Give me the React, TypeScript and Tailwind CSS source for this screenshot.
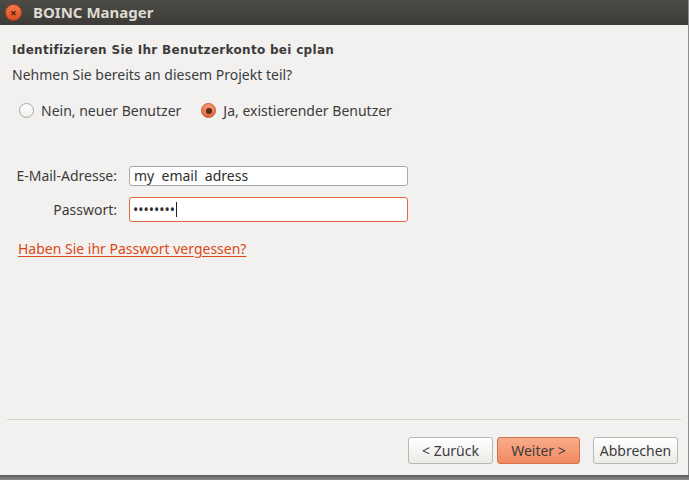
import React, { useState } from 'react';

const font = { fontFamily: '"Noto Sans", "DejaVu Sans", sans-serif' };

const Radio = ({ checked, label, onClick }: { checked: boolean; label: string; onClick: () => void }) => (
    <button onClick={onClick} className="flex items-center gap-[7px] text-[14px] text-[#3c3c3c]">
        {checked ? (
            <span className="w-[15px] h-[15px] rounded-full bg-gradient-to-b from-[#f59a6f] to-[#e0643a] border border-[#c8552d] flex items-center justify-center">
                <span className="w-[6px] h-[6px] rounded-full bg-[#5a2a1a]" />
            </span>
        ) : (
            <span className="w-[15px] h-[15px] rounded-full bg-gradient-to-b from-white to-[#f0efed] border border-[#a8a7a3]" />
        )}
        <span>{label}</span>
    </button>
);

export default function App() {
    const [existing, setExisting] = useState(true);

    return (
        <div className="w-[689px] h-[480px] bg-[#7a7a78] flex flex-col overflow-hidden" style={font}>
            <div className="flex h-[475px]">
                <div className="w-[688px] flex flex-col bg-[#f2f1f0]">
                    {/* title bar */}
                    <div className="h-[25px] flex items-center bg-gradient-to-b from-[#4d4b45] to-[#3c3b37] pl-[5px]">
                        <span className="w-[17px] h-[17px] rounded-full bg-gradient-to-b from-[#f47a4e] to-[#dc4e22] border border-[#a8401d] flex items-center justify-center text-[#5a1a08] text-[11px] leading-none font-bold">×</span>
                        <span className="ml-[11px] text-[15px] font-bold text-[#dfdbd2]">BOINC Manager</span>
                    </div>

                    <div className="flex-1 flex flex-col px-[12px]">
                        <div className="mt-[16px] text-[12px] tracking-[0.3px] font-bold text-[#3c3c3c]" style={{ fontFamily: '"DejaVu Sans", sans-serif' }}>
                            Identifizieren Sie Ihr Benutzerkonto bei cplan
                        </div>
                        <div className="mt-[5px] text-[14px] text-[#3c3c3c]">Nehmen Sie bereits an diesem Projekt teil?</div>

                        <div className="mt-[15px] ml-[7px] flex items-center gap-[20px]">
                            <Radio checked={!existing} label="Nein, neuer Benutzer" onClick={() => setExisting(false)} />
                            <Radio checked={existing} label="Ja, existierender Benutzer" onClick={() => setExisting(true)} />
                        </div>

                        <div className="mt-[44px] grid grid-cols-[105px_279px] gap-x-[12px] gap-y-[11px] items-center text-[14px] text-[#3c3c3c]">
                            <label className="text-right">E-Mail-Adresse:</label>
                            <input defaultValue="my  email  adress" className="h-[20px] rounded-[3px] border border-[#a9a8a4] bg-white px-[4px] text-[14px] text-[#2e2e2e] outline-none" style={{ whiteSpace: 'pre' }} />
                            <label className="text-right">Passwort:</label>
                            <div className="h-[25px] rounded-[3px] border border-[#e06a43] bg-white px-[3px] flex items-center">
                                <span className="text-[14px] leading-none text-[#2e2e2e]">••••••••</span>
                                <span className="ml-[1px] w-px h-[15px] bg-[#222]" />
                            </div>
                        </div>

                        <a href="#" className="mt-[16px] ml-[6px] self-start text-[14px] text-[#dd4814] underline underline-offset-2">
                            Haben Sie ihr Passwort vergessen?
                        </a>

                        <div className="flex-1" />
                        <div className="h-px bg-[#d6d4d0] -mx-[5px]" />

                        <div className="flex justify-end items-start h-[55px] pt-[17px] text-[14px]">
                            <button className="w-[85px] h-[27px] rounded-[3px] border border-[#b9b7b2] bg-gradient-to-b from-white to-[#ecebe9] text-[#3c3c3c]">&lt; Zurück</button>
                            <button className="ml-[4px] w-[83px] h-[27px] rounded-[3px] border border-[#d2734b] bg-gradient-to-b from-[#f9ab8a] to-[#f08a60] text-[#3c3c3c]">Weiter &gt;</button>
                            <button className="ml-[13px] -mr-[2px] w-[85px] h-[27px] rounded-[3px] border border-[#b9b7b2] bg-gradient-to-b from-white to-[#ecebe9] text-[#3c3c3c]">Abbrechen</button>
                        </div>
                    </div>
                </div>
                <div className="flex-1 bg-[#8d8d8b]" />
            </div>
            <div className="flex-1 bg-gradient-to-b from-[#5a5a58] to-[#8a8a88]" />
        </div>
    );
}
